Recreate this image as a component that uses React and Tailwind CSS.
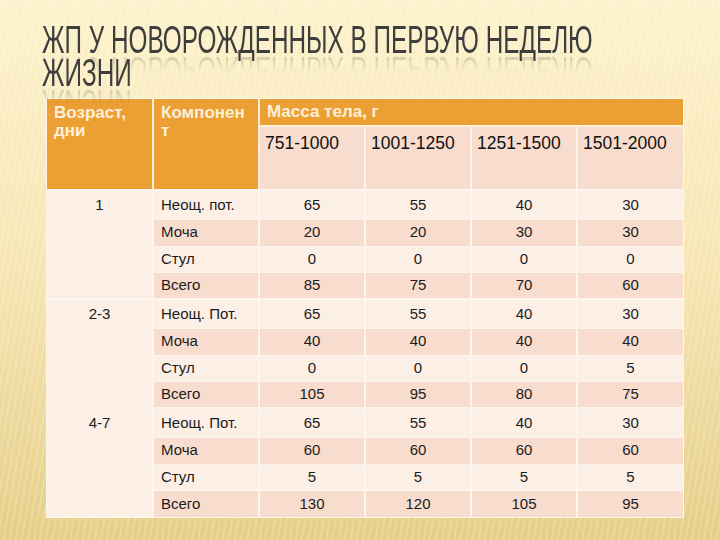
import React from 'react';

// данные таблицы: возраст -> компонент -> масса тела
const groups = [
  {
    age: '1',
    rows: [
      ['Неощ. пот.', 65, 55, 40, 30],
      ['Моча', 20, 20, 30, 30],
      ['Стул', 0, 0, 0, 0],
      ['Всего', 85, 75, 70, 60],
    ],
  },
  {
    age: '2-3',
    rows: [
      ['Неощ. Пот.', 65, 55, 40, 30],
      ['Моча', 40, 40, 40, 40],
      ['Стул', 0, 0, 0, 5],
      ['Всего', 105, 95, 80, 75],
    ],
  },
  {
    age: '4-7',
    rows: [
      ['Неощ. Пот.', 65, 55, 40, 30],
      ['Моча', 60, 60, 60, 60],
      ['Стул', 5, 5, 5, 5],
      ['Всего', 130, 120, 105, 95],
    ],
  },
];

const rowHeights = ['h-[29px]', 'h-[27px]', 'h-[26px]', 'h-[27px]'];
const ranges = ['751-1000', '1001-1250', '1251-1500', '1501-2000'];

const TitleLine = ({ children }) => (
  <div className="h-[33px] leading-[33px] whitespace-nowrap">
    <span className="inline-block origin-left scale-x-[0.64] [-webkit-box-reflect:below_-4px_linear-gradient(transparent_40%,rgba(0,0,0,0.25))]">
      {children}
    </span>
  </div>
);

export default function App() {
  return (
    <div className="w-[720px] h-[540px] overflow-hidden bg-[repeating-linear-gradient(100deg,rgba(255,255,255,0.18)_0px,rgba(255,255,255,0.18)_2px,transparent_2px,transparent_6px),linear-gradient(to_bottom,#fdf2cc,#f8e7b6_45%,#e5cf88)] font-['Liberation_Sans',Arial,sans-serif]">
      {/* TITLE */}
      <div className="pt-[24px] pl-[42px] text-[38px] text-[#3e3e3e]">
        <TitleLine>ЖП У НОВОРОЖДЕННЫХ В ПЕРВУЮ НЕДЕЛЮ</TitleLine>
        <TitleLine>ЖИЗНИ</TitleLine>
      </div>

      {/* TABLE */}
      <div className="ml-[46px] mt-[8px] w-[638px] border border-[#fff8ea]">
        <table className="w-full table-fixed border-collapse text-[15px] text-[#1c1c1c]">
          <thead>
            <tr className="h-[27px]">
              <th rowSpan={2} className="w-[106px] bg-[#ec9f33] border-r-2 border-[#fdf1dc] align-top text-left font-bold text-[17px] leading-[18px] text-[#fcf0dc] pl-[7px] pr-0 pt-[5px] h-[91px]">
                Возраст,<br />дни
              </th>
              <th rowSpan={2} className="w-[106px] bg-[#ec9f33] border-r-2 border-[#fdf1dc] align-top text-left font-bold text-[17px] leading-[18px] text-[#fcf0dc] pl-[7px] pr-0 pt-[5px]">
                Компонен<br />т
              </th>
              <th colSpan={4} className="bg-[#ec9f33] border-b-2 border-[#fdf1dc] text-left font-bold text-[17px] text-[#fcf0dc] px-[7px] align-middle">
                Масса тела, г
              </th>
            </tr>
            <tr className="h-[64px]">
              {ranges.map((r, i) => (
                <th key={r} className={`bg-[#f8dccd] align-top text-left font-normal text-[17.5px] text-[#111] px-[5px] pt-[3px] ${i > 0 ? 'border-l-2 border-[#fdf3ea]' : ''}`}>
                  {r}
                </th>
              ))}
            </tr>
          </thead>
          <tbody>
            {groups.map((g) =>
              g.rows.map((row, i) => {
                const bg = i % 2 === 0 ? 'bg-[#fbefe6]' : 'bg-[#f8dccd]';
                return (
                  <tr key={g.age + i} className={rowHeights[i]}>
                    {i === 0 && (
                      <td rowSpan={4} className="bg-[#fbefe6] border-t-2 border-r-2 border-[#fdf6ee] align-top text-center pt-[3px]">
                        {g.age}
                      </td>
                    )}
                    <td className={`${bg} ${i === 0 ? 'border-t-2' : 'border-t'} border-[#fdf6ee] px-[7px]`}>
                      {row[0]}
                    </td>
                    {row.slice(1).map((v, j) => (
                      <td key={j} className={`${bg} ${i === 0 ? 'border-t-2' : 'border-t'} border-l-2 border-[#fdf6ee] text-center`}>
                        {v}
                      </td>
                    ))}
                  </tr>
                );
              })
            )}
          </tbody>
        </table>
      </div>
    </div>
  );
}
